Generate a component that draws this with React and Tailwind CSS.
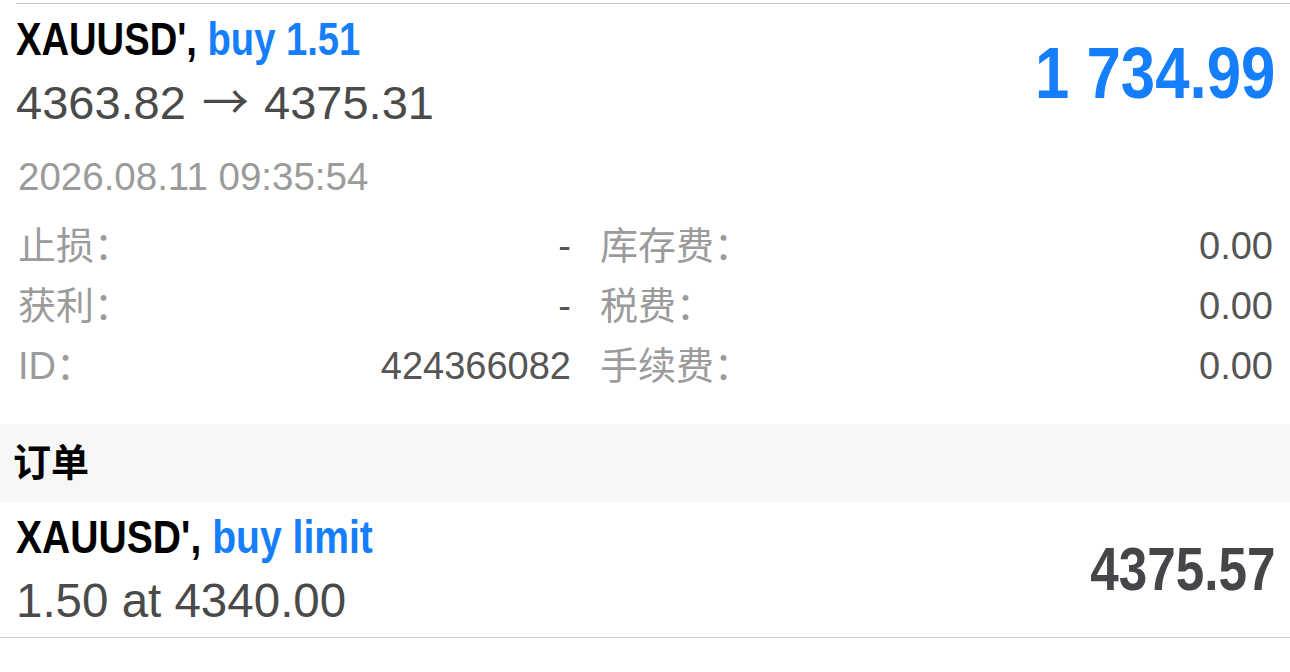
import React from "react";

const sans = "font-['Liberation_Sans','Noto_Sans_CJK_SC',sans-serif]";

const details = [
  { left: "止损：", leftValue: "-", right: "库存费：", rightValue: "0.00" },
  { left: "获利：", leftValue: "-", right: "税费：", rightValue: "0.00" },
  { left: "ID：", leftValue: "424366082", right: "手续费：", rightValue: "0.00" },
];

const DetailRow = ({ row }) => (
  <div className="flex h-[60px] items-start text-[38px] leading-[60px]">
    <div className="flex w-[553px] justify-between">
      <span className="text-[#9b9b9b]">{row.left}</span>
      <span className="text-[#555555]">{row.leftValue}</span>
    </div>
    <div className="ml-[29px] flex flex-1 justify-between">
      <span className="text-[#9b9b9b]">{row.right}</span>
      <span className="text-[#555555]">{row.rightValue}</span>
    </div>
  </div>
);

// condensed bold headline: Liberation Sans Bold squeezed horizontally
const Condensed = ({ children, origin = "origin-left", scale = "scale-x-[0.83]" }) => (
  <span className={`inline-block ${origin} ${scale}`}>{children}</span>
);

export default function App() {
  return (
    <div className={`w-[1290px] h-[672px] bg-white overflow-hidden ${sans}`}>
      <div className="pt-[3px]">
        {/* open position */}
        <div className="ml-[16px] border-t border-[#c9c9c9]">
          <div className="flex items-center justify-between pt-[4px] pr-[15px]">
            <div>
              <div className="text-[46px] leading-[63px] font-bold text-black whitespace-nowrap">
                <Condensed>
                  XAUUSD', <span className="text-[#157efb]">buy 1.51</span>
                </Condensed>
              </div>
              <div className="text-[47px] leading-[63px] text-[#4a4a4a] whitespace-nowrap">
                4363.82{" "}
                <span className="font-['Noto_Sans_CJK_SC'] leading-none ml-[3px] mr-[2px]">→</span>{" "}
                4375.31
              </div>
            </div>
            <div className="pt-[3px] text-[72px] leading-[72px] font-bold text-[#157efb] whitespace-nowrap">
              <Condensed origin="origin-right" scale="scale-x-[0.857]">
                1 734.99
              </Condensed>
            </div>
          </div>

          <div className="mt-[24px] text-[38.5px] leading-[38px] text-[#9b9b9b] pl-[2px]">
            2026.08.11 09:35:54
          </div>

          <div className="mt-[20px] pl-[2px] pr-[17px]">
            {details.map((row, i) => (
              <DetailRow key={i} row={row} />
            ))}
          </div>
        </div>

        {/* orders section header */}
        <div className="mt-[28px] h-[78px] bg-[#f7f7f7] pl-[13px] flex items-center">
          <span className="text-[38px] font-bold text-black leading-none">订单</span>
        </div>

        {/* pending order */}
        <div className="border-b border-[#c9c9c9]">
          <div className="flex items-center justify-between pl-[16px] pr-[15px] pt-[4px] pb-[5px]">
            <div>
              <div className="text-[46px] leading-[63px] font-bold text-black whitespace-nowrap">
                <Condensed scale="scale-x-[0.85]">
                  XAUUSD', <span className="text-[#157efb]">buy limit</span>
                </Condensed>
              </div>
              <div className="text-[47.5px] leading-[63px] text-[#4a4a4a]">
                1.50 at 4340.00
              </div>
            </div>
            <div className="text-[61px] leading-[61px] font-bold text-[#46464a] whitespace-nowrap">
              <Condensed origin="origin-right" scale="scale-x-[0.84]">
                4375.57
              </Condensed>
            </div>
          </div>
        </div>
      </div>
    </div>
  );
}
